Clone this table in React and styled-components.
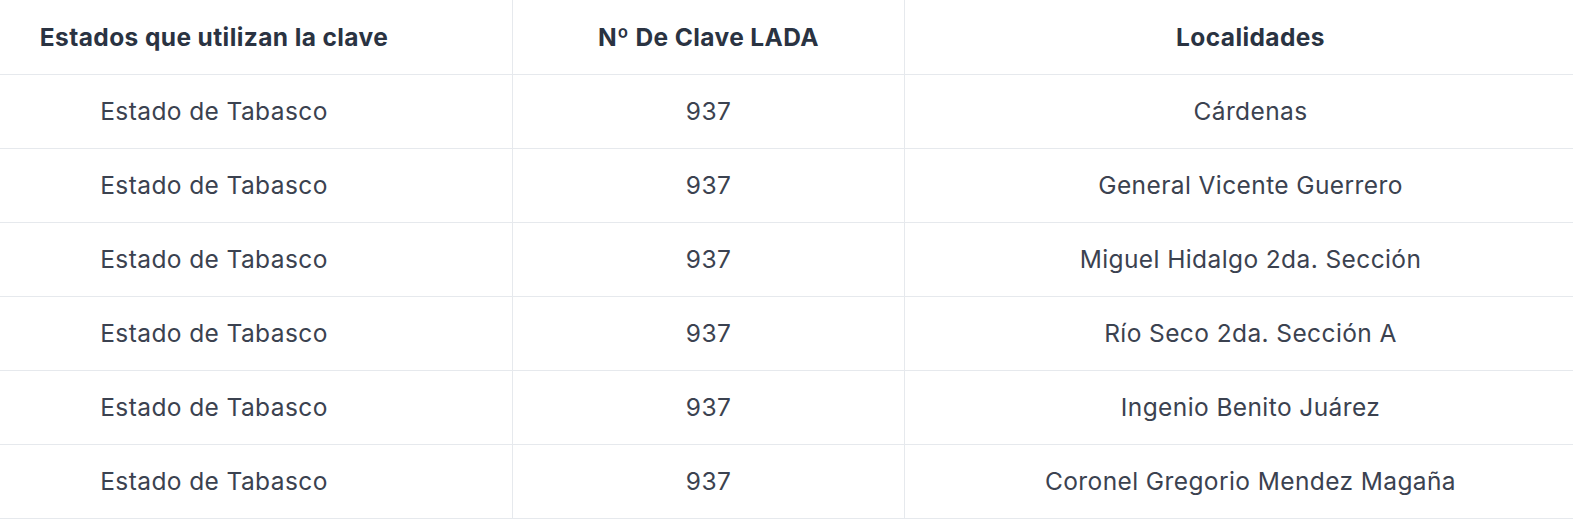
import React from "react";
import styled, { createGlobalStyle } from "styled-components";

const rows = [
  "Cárdenas",
  "General Vicente Guerrero",
  "Miguel Hidalgo 2da. Sección",
  "Río Seco 2da. Sección A",
  "Ingenio Benito Juárez",
  "Coronel Gregorio Mendez Magaña",
];

const GlobalStyle = createGlobalStyle`
  body {
    margin: 0;
    background: #fff;
    font-family: Inter, "Noto Sans", sans-serif;
  }
`;

const Table = styled.div`
  display: grid;
  grid-template-columns: 513px 392px 1fr;
  width: 100%;
`;

const cellPad = {
  0: "0 84px 0 0",
  1: "0",
  2: "0 0 0 23px",
};

const Cell = styled.div`
  height: 74px;
  box-sizing: border-box;
  display: flex;
  align-items: center;
  justify-content: center;
  padding: ${(p) => cellPad[p.$col]};
  padding-bottom: 1px;
  border-bottom: 1px solid #e6e9ed;
  border-right: ${(p) => (p.$col < 2 ? "1px solid #e6e9ed" : "none")};
  font-size: 24.5px;
  letter-spacing: 0.4px;
  color: #3b4250;
  white-space: nowrap;
`;

const HeadCell = styled(Cell)`
  height: 75px;
  padding-bottom: 0;
  font-weight: 700;
  color: #2a3342;
`;

const App = () => {
  return (
    <>
      <GlobalStyle />
      <Table>
        <HeadCell $col={0}>Estados que utilizan la clave</HeadCell>
        <HeadCell $col={1}>Nº De Clave LADA</HeadCell>
        <HeadCell $col={2}>Localidades</HeadCell>
        {rows.map((loc) => (
          <React.Fragment key={loc}>
            <Cell $col={0}>Estado de Tabasco</Cell>
            <Cell $col={1}>937</Cell>
            <Cell $col={2}>{loc}</Cell>
          </React.Fragment>
        ))}
      </Table>
    </>
  );
};

export default App;
